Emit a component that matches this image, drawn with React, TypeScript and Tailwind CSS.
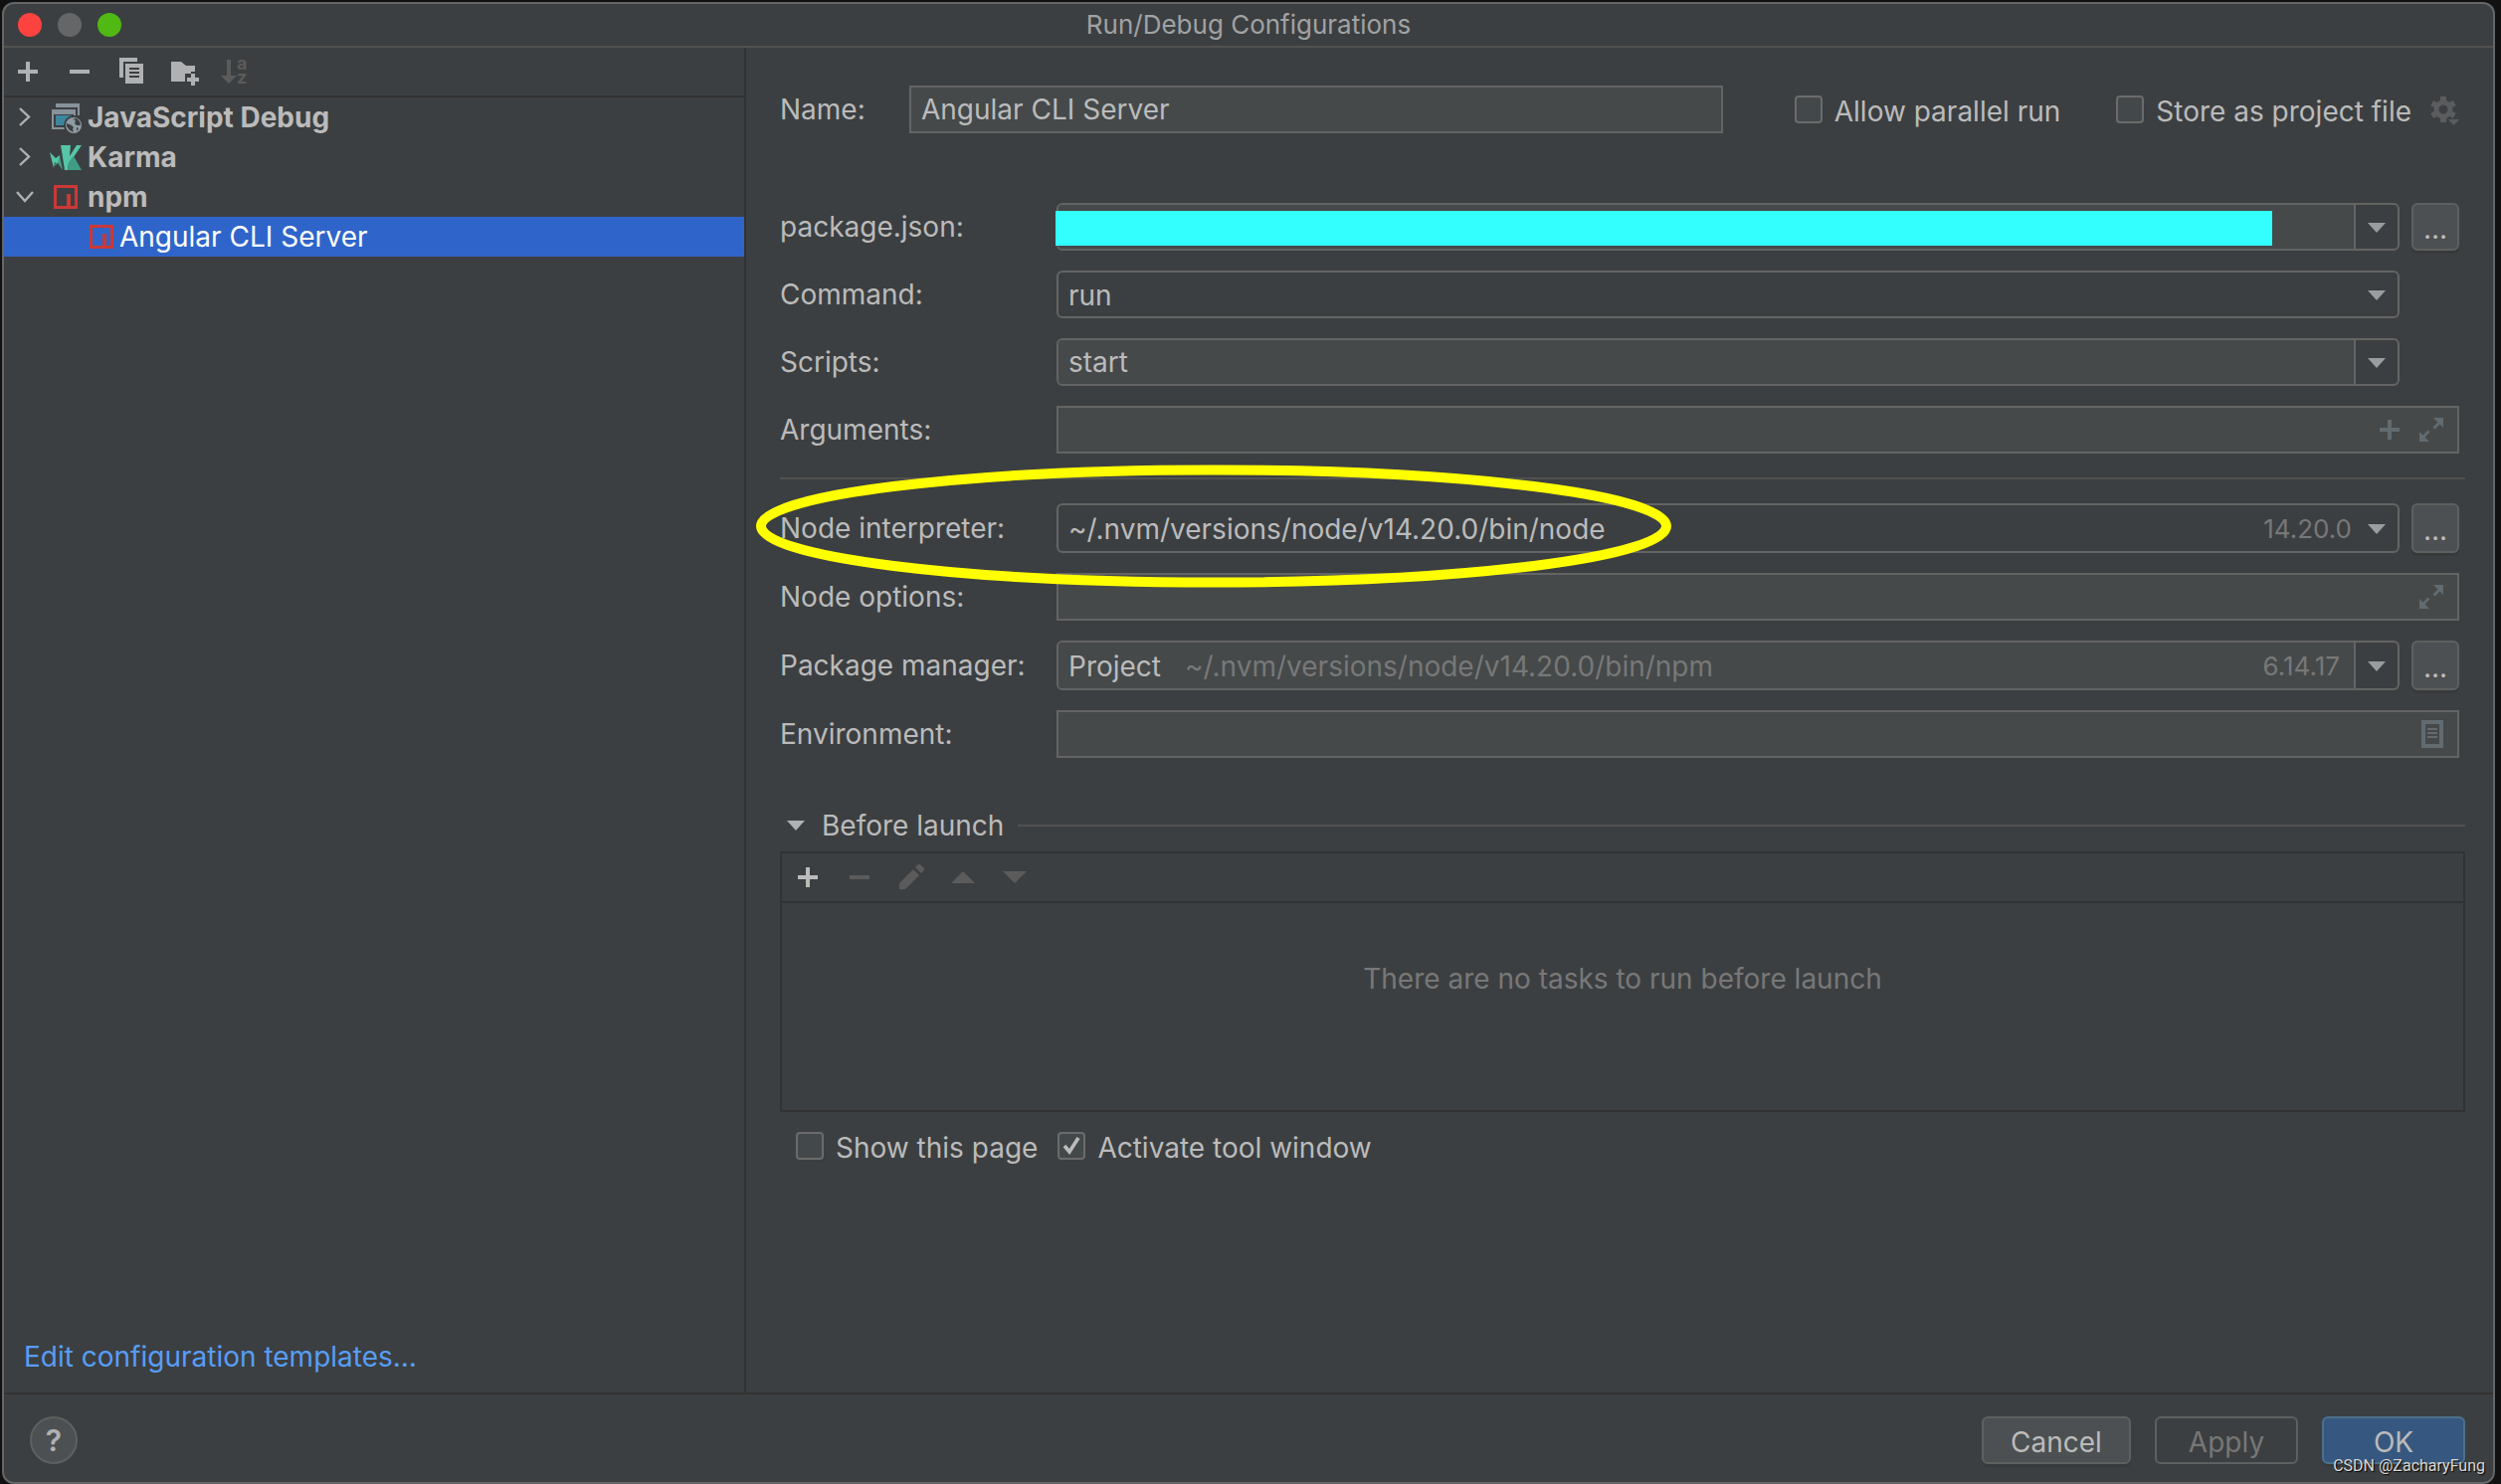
import type { ReactNode } from 'react'
import { clsx } from 'clsx'

function Icon({ children, className }: { children: ReactNode; className?: string }) {
  return (
    <svg viewBox="0 0 32 32" className={clsx('size-8 shrink-0 overflow-visible', className)} fill="currentColor" aria-hidden="true">
      {children}
    </svg>
  )
}

const PlusIcon = () => <Icon><path d="M14 6h4v8h8v4h-8v8h-4v-8H6v-4h8z" /></Icon>
const MinusIcon = () => <Icon><path d="M6 14h20v4H6z" /></Icon>

const CopyIcon = () => (
  <Icon>
    <path d="M4 2h18v4H8v16H4z" />
    <path fillRule="evenodd" d="M10 8h18v20H10zM14 12v2h10v-2zM14 16v2h10v-2zM14 20v2h10v-2z" />
  </Icon>
)

const FolderAddIcon = () => (
  <Icon>
    <path d="M4 6h10l5 4h9v6h-4v2h-6v8H4z" />
    <path d="M24 18h4v4h4v4h-4v4h-4v-4h-4v-4h4z" />
  </Icon>
)

const SortIcon = () => (
  <Icon>
    <path d="M8 4h4v16h6l-8 8-8-8h6z" />
    <text x="18" y="14" fontSize="18" fontWeight="700" fontFamily="Inter, sans-serif">a</text>
    <text x="18" y="28" fontSize="18" fontWeight="700" fontFamily="Inter, sans-serif">z</text>
  </Icon>
)

const PencilIcon = () => (
  <Icon><path d="M4 22 18 8l6 6-14 14H4zM20 6l2-2q2-2 4 0l2 2q2 2 0 4l-2 2z" /></Icon>
)

const JsDebugIcon = () => (
  <Icon>
    <path d="M6 2h24v12h-2V6H6z" fill="#87939a" />
    <path fillRule="evenodd" d="M2 8h24v20H2zM4 13v13h20V13z" fill="#87939a" />
    <path d="M6 14h16v10H6z" fill="#3e86a0" />
    <circle cx="24" cy="24" r="10" fill="#3c3f41" />
    <circle cx="24" cy="24" r="8" fill="#8e9ba3" />
    <path d="M17 22l5 2 2 2-1 2 1 3-4-2-3-4zM23 18l3 1-1 3 2 2h4l-1-4-3-3zM27 26l2 1-2 3z" fill="#3c3f41" />
  </Icon>
)

const KarmaIcon = () => (
  <Icon>
    <path d="M11 4h10l-1 11 7-11h5L24 16l-5 6-1 7h-3z" fill="#56c5a8" />
    <path d="m19 21 5-6 8 14H18z" fill="#3f9d85" />
    <path d="m6 19 4-5 3 15-5-7-3 3z" fill="#3f9d85" />
    <path d="m0 11 6 6 4-3-2 8-3-1-1 6z" fill="#56c5a8" />
  </Icon>
)

const NpmIcon = () => (
  <Icon><path fillRule="evenodd" fill="#cb3837" d="M4 4h24v24H4zM7 7v18h10V13h4v12h4V7z" /></Icon>
)

const Chevron = ({ open }: { open?: boolean }) => (
  <svg viewBox="0 0 34 32" className="h-8 w-[34px] shrink-0" fill="none" stroke="#afb1b3" strokeWidth="2.4" aria-hidden="true">
    <path d={open ? 'M9 11l8 9 8-9' : 'M12 7l9 8.500-9 8.500'} />
  </svg>
)

const ExpandIcon = () => (
  <Icon>
    <path d="M18 4h10v10l-3.500-3.500-5 5-2-2 5-5zM4 18l3.500 3.500 5-5 2 2-5 5L14 28H4z" />
  </Icon>
)

const ListIcon = () => (
  <Icon>
    <path fillRule="evenodd" d="M6 2h22v28H6zM10 6v20h14V6z" />
    <path d="M12 10h10v2H12zM12 14h10v2H12zM12 18h10v2H12z" />
  </Icon>
)

const GearIcon = () => (
  <Icon>
    <circle cx="16" cy="16" r="7" fill="none" stroke="currentColor" strokeWidth="5" />
    <path d="M13 3h6v5h-6zM13 24h6v5h-6z" />
    <path d="M13 3h6v5h-6zM13 24h6v5h-6z" transform="rotate(60 16 16)" />
    <path d="M13 3h6v5h-6zM13 24h6v5h-6z" transform="rotate(120 16 16)" />
    <path d="M21 26h11l-5.500 6z" />
  </Icon>
)

const Arrow = ({ className }: { className?: string }) => (
  <svg viewBox="0 0 18 10" className={clsx('h-2.5 w-[18px] shrink-0', className)} fill="currentColor" aria-hidden="true">
    <path d="M0 0h18L9 10z" />
  </svg>
)

function Row({ label, id, children }: { label: string; id: string; children: ReactNode }) {
  return (
    <div className="flex items-center pr-1.5">
      <label htmlFor={id} className="w-[278px] shrink-0">{label}</label>
      {children}
    </div>
  )
}

function Combo({ children, editable, tall, more }: { children: ReactNode; editable?: boolean; tall?: boolean; more?: boolean }) {
  return (
    <>
      <div className={clsx('relative flex flex-1 rounded-md border-2 border-[#646464]', tall ? 'h-[50px]' : 'h-12')}>
        <div className={clsx('flex flex-1 items-center pl-2.5', editable && 'rounded-l-sm border-r-2 border-[#646464] bg-[#45494a]', (tall || !editable) && 'pt-0.5')}>
          {children}
        </div>
        <span className="pointer-events-none flex w-[42px] items-center justify-center pt-0.5 text-[#9a9da0]"><Arrow /></span>
      </div>
      {more
        ? <button aria-label="Browse" className={clsx('ml-3 w-12 rounded-md border-2 border-[#5e6060] bg-[#4c5052] pt-1 shadow-[0_3px_0_#37393b]', tall ? 'h-[50px]' : 'h-12')}>...</button>
        : <span className="ml-3 w-12" />}
    </>
  )
}

function TextBox({ id, children }: { id: string; children: ReactNode }) {
  return (
    <div className="flex h-12 flex-1 items-center gap-2.5 border-2 border-[#646464] bg-[#45494a] pr-2.5 text-[#616b70]">
      <input id={id} className="h-full min-w-0 flex-1 bg-transparent px-2.5 text-[#bbbbbb] outline-none" />
      {children}
    </div>
  )
}

function Check({ label, checked }: { label: string; checked?: boolean }) {
  return (
    <label className="flex items-center gap-3">
      <span className="relative flex size-7">
        <input type="checkbox" defaultChecked={checked} className="peer size-7 appearance-none rounded-sm border-2 border-[#6b6b6b] bg-[#43494a]" />
        <svg viewBox="0 0 28 28" className="pointer-events-none absolute inset-0 hidden peer-checked:block" fill="none" stroke="#bbbbbb" strokeWidth="3.600" aria-hidden="true">
          <path d="M7 14l5 6L21 6" />
        </svg>
      </span>
      <span className="pt-1">{label}</span>
    </label>
  )
}

const groups = [
  { name: 'JavaScript Debug', icon: <JsDebugIcon />, open: false },
  { name: 'Karma', icon: <KarmaIcon />, open: false },
  { name: 'npm', icon: <NpmIcon />, open: true },
]

function Sidebar() {
  return (
    <aside className="flex w-[746px] shrink-0 flex-col border-r-2 border-[#323232]">
      <div className="flex h-[50px] items-center gap-5 border-b-2 border-[#323232] px-2 text-[#afb1b3]">
        <button aria-label="Add configuration"><PlusIcon /></button>
        <button aria-label="Remove configuration"><MinusIcon /></button>
        <button aria-label="Copy configuration"><CopyIcon /></button>
        <button aria-label="Create folder"><FolderAddIcon /></button>
        <button aria-label="Sort configurations" disabled className="text-[#5b5b5b]"><SortIcon /></button>
      </div>
      <ul>
        {groups.map(g => (
          <li key={g.name} className="flex h-10 items-center pl-1 font-bold">
            <Chevron open={g.open} />
            <span className="mr-1.5 ml-2">{g.icon}</span>
            {g.name}
          </li>
        ))}
        <li className="flex h-10 items-center gap-0.5 bg-[#2f65ca] pl-[82px] text-white"><NpmIcon />Angular CLI Server</li>
      </ul>
      <a href="#templates" className="mt-auto mb-5 ml-5 self-start text-[#589df6]">Edit configuration templates…</a>
    </aside>
  )
}

function BeforeLaunch() {
  return (
    <section className="mt-[52px]">
      <div className="flex items-center">
        <button className="flex items-center gap-[17px] pl-[7px]"><Arrow className="text-[#afb1b3]" />Before launch</button>
        <div className="ml-3.5 h-0.5 flex-1 bg-[#515151]" />
      </div>
      <div className="mt-2.5 border-2 border-[#323232]">
        <div className="flex h-[50px] items-center gap-5 border-b-2 border-[#323232] px-2.5 text-[#5b5b5b]">
          <button aria-label="Add task" className="text-[#bbbbbb]"><PlusIcon /></button>
          <button aria-label="Remove task" disabled><MinusIcon /></button>
          <button aria-label="Edit task" disabled><PencilIcon /></button>
          <button aria-label="Move up" disabled><Icon><path d="M4 22h24L16 10z" /></Icon></button>
          <button aria-label="Move down" disabled><Icon><path d="M4 10h24L16 22z" /></Icon></button>
        </div>
        <p className="flex h-52 justify-center pt-[60px] text-[#787878]">There are no tasks to run before launch</p>
      </div>
      <div className="mt-4 flex gap-5 pl-4">
        <Check label="Show this page" />
        <Check label="Activate tool window" checked />
      </div>
    </section>
  )
}

function Settings() {
  return (
    <main className="min-w-0 flex-1 pt-[38px] pr-7 pl-[34px]">
      <div className="flex items-center pr-1.5">
        <label htmlFor="name" className="w-[130px] shrink-0">Name:</label>
        <input id="name" defaultValue="Angular CLI Server" className="h-12 min-w-0 flex-1 border-2 border-[#646464] bg-[#45494a] px-2.5 outline-none" />
        <div className="ml-[72px] flex items-center gap-14">
          <Check label="Allow parallel run" />
          <div className="flex items-center gap-4">
            <Check label="Store as project file" />
            <button aria-label="Storage options" className="text-[#5b5c5e]"><GearIcon /></button>
          </div>
        </div>
      </div>

      <div className="mt-[70px] flex flex-col gap-5">
        <Row label="package.json:" id="package">
          <Combo editable more>
            <input id="package" className="h-full w-full bg-transparent outline-none" />
            <div className="absolute top-1.5 right-[126px] -left-[3px] h-[35px] bg-[#33ffff]" />
          </Combo>
        </Row>
        <Row label="Command:" id="command">
          <Combo>
            <select id="command" className="flex-1 appearance-none outline-none"><option>run</option></select>
          </Combo>
        </Row>
        <Row label="Scripts:" id="scripts">
          <Combo editable>
            <input id="scripts" defaultValue="start" className="h-full w-full bg-transparent outline-none" />
          </Combo>
        </Row>
        <Row label="Arguments:" id="arguments">
          <TextBox id="arguments">
            <button aria-label="Insert macro"><PlusIcon /></button>
            <button aria-label="Expand arguments"><ExpandIcon /></button>
          </TextBox>
        </Row>
      </div>

      <hr className="my-6 border-t-2 border-[#515151]" />

      <div className="relative flex flex-col gap-5">
        <Row label="Node interpreter:" id="interpreter">
          <Combo tall more>
            <select id="interpreter" className="flex-1 appearance-none outline-none"><option>~/.nvm/versions/node/v14.20.0/bin/node</option></select>
            <span className="pr-1 text-[26px] text-[#787878]">14.20.0</span>
          </Combo>
        </Row>
        <Row label="Node options:" id="options">
          <TextBox id="options">
            <button aria-label="Expand options"><ExpandIcon /></button>
          </TextBox>
        </Row>
        <Row label="Package manager:" id="manager">
          <Combo editable tall more>
            <select id="manager" className="field-sizing-content appearance-none outline-none"><option>Project</option></select>
            <span className="flex-1 pl-6 text-[#787878]">~/.nvm/versions/node/v14.20.0/bin/npm</span>
            <span className="pr-3.5 text-[26px] text-[#787878]">6.14.17</span>
          </Combo>
        </Row>
        <Row label="Environment:" id="environment">
          <TextBox id="environment">
            <button aria-label="Edit environment variables"><ListIcon /></button>
          </TextBox>
        </Row>
        {/* hand-drawn highlight around the interpreter */}
        <svg viewBox="0 0 920 124" className="pointer-events-none absolute -top-[39px] -left-6 h-[124px] w-[920px]" fill="none" stroke="#ffff00" strokeWidth="10" aria-hidden="true">
          <ellipse cx="460" cy="62" rx="455" ry="56.500" />
        </svg>
      </div>

      <BeforeLaunch />
    </main>
  )
}

export default function App() {
  return (
    <div className="flex min-h-screen bg-[#111111] pt-0.5 pr-1.5 pl-0.5 font-[Inter,'Liberation_Sans',sans-serif] text-[28px] leading-8 text-[#bbbbbb]">
      <div className="relative flex flex-1 flex-col rounded-xl border-2 border-[#646667] bg-[#3c3f41]">
        <header className="flex h-11 items-center border-b-2 border-[#515151] px-3.5">
          <div className="flex flex-1 gap-4">
            <button aria-label="Close" className="size-6 rounded-full bg-[#fc4340]" />
            <button aria-label="Minimize" className="size-6 rounded-full bg-[#656668]" />
            <button aria-label="Zoom" className="size-6 rounded-full bg-[#50b914]" />
          </div>
          <h1 className="text-[26px] text-[#a0a2a3]">Run/Debug Configurations</h1>
          <div className="flex-1" />
        </header>
        <div className="flex flex-1">
          <Sidebar />
          <Settings />
        </div>
        <footer className="flex items-center border-t-2 border-[#323232] pt-[22px] pr-7 pb-[18px] pl-[26px]">
          <button aria-label="Help" className="size-12 rounded-full border-2 border-[#5e6060] bg-[#4c5052] text-3xl font-semibold text-[#afb1b3]">?</button>
          <div className="ml-auto flex gap-6">
            <button className="h-12 w-[150px] rounded-md border-2 border-[#5e6060] bg-[#4c5052] pt-1 shadow-[0_3px_0_#37393b]">Cancel</button>
            <button disabled className="h-12 w-36 rounded-md border-2 border-[#5e6060] pt-1 text-[#777777]">Apply</button>
            <button className="h-12 w-36 rounded-md border-2 border-[#4c708c] bg-[#365880] pt-1 shadow-[0_3px_0_#37393b]">OK</button>
          </div>
        </footer>
        <span className="absolute right-2 bottom-1 font-[Roboto,'Liberation_Sans',sans-serif] text-base text-[#d8d8d8] [text-shadow:1px_1px_1px_#000]">CSDN @ZacharyFung</span>
      </div>
    </div>
  )
}
